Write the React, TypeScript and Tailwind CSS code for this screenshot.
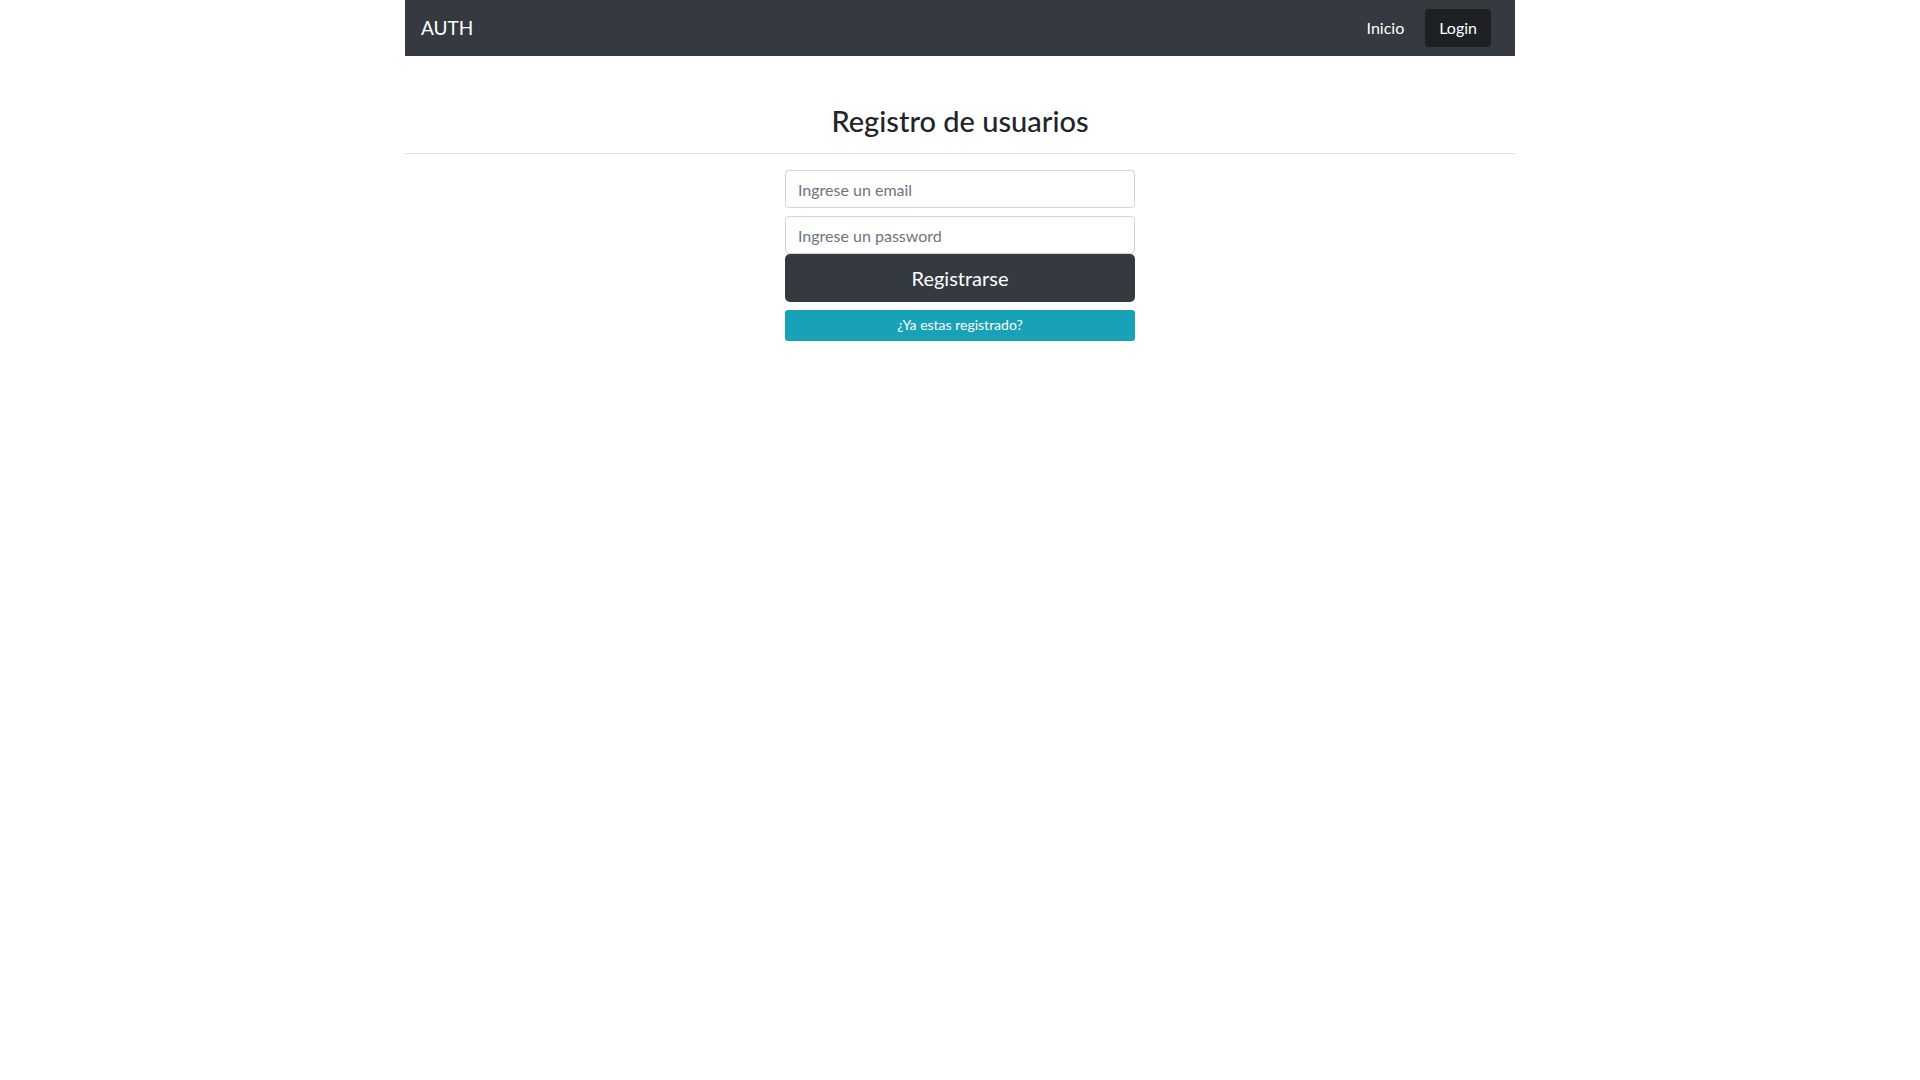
export default function App() {
  return (
    <div className="min-h-screen bg-white font-['Lato','Noto_Sans',sans-serif] text-[#212529]">
      <div className="mx-auto w-[1110px]">
        <nav className="flex h-14 items-center justify-between bg-[#343a40] pl-4 pr-6">
          <span className="text-[19px] text-white">AUTH</span>
          <div className="flex items-center gap-[21px]">
            <span className="text-base text-white">Inicio</span>
            <button className="h-[38px] rounded bg-[#1d2124] px-[14px] text-base text-white">
              Login
            </button>
          </div>
        </nav>

        <h3 className="mt-[48px] text-center text-[29px] font-medium leading-[1.2]">
          Registro de usuarios
        </h3>
        <hr className="mt-[14px] border-t border-[#e2e2e2]" />

        <div className="mx-auto mt-4 flex w-[350px] flex-col">
          <input
            type="email"
            placeholder="Ingrese un email"
            className="h-[38px] rounded border border-[#ced4da] px-3 pt-px text-base placeholder:text-[#6c757d]"
          />
          <input
            type="password"
            placeholder="Ingrese un password"
            className="mt-2 h-[38px] rounded border border-[#ced4da] px-3 pt-px text-base placeholder:text-[#6c757d]"
          />
          <button className="h-12 rounded-[5px] bg-[#343a40] text-xl text-white">
            Registrarse
          </button>
          <button className="mt-2 h-[31px] rounded-[3px] bg-[#17a2b8] text-sm text-white">
            ¿Ya estas registrado?
          </button>
        </div>
      </div>
    </div>
  );
}
